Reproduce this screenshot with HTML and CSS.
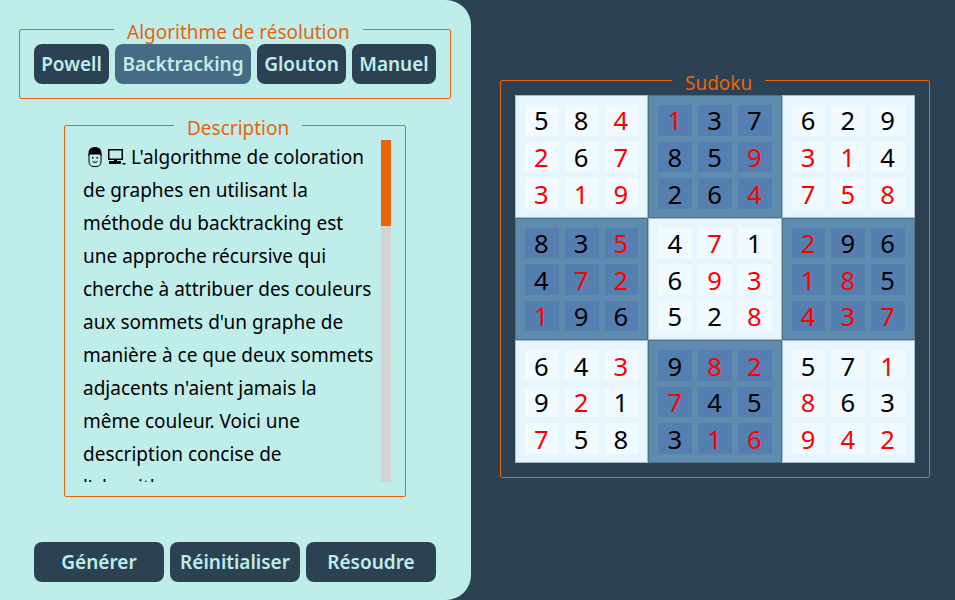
FILE: index.html
```html
<!DOCTYPE html>
<html lang="fr">
<head>
    <meta charset="UTF-8">
    <meta name="viewport" content="width=device-width, initial-scale=1.0">
    <title>Sudoku</title>
    <link rel="stylesheet" href="styles.css">
</head>
<body>
    <aside class="sidebar">
        <fieldset class="algo-box">
            <legend>Algorithme de résolution</legend>
            <div class="algo-buttons">
                <button class="btn">Powell</button>
                <button class="btn active">Backtracking</button>
                <button class="btn">Glouton</button>
                <button class="btn">Manuel</button>
            </div>
        </fieldset>

        <fieldset class="desc-box">
            <legend>Description</legend>
            <div class="desc-body">
                <div class="desc-text">
                    <svg class="icon-man" viewBox="0 0 14 21" width="14" height="21" aria-hidden="true">
                        <path d="M1 8v8c0 2.500 2 4.500 4 4.500h4c2 0 4-2 4-4.500V8" fill="none" stroke="#000" stroke-width="1"/>
                        <path d="M0.500 10V7C0.500 3 3.500 1 7 1s6.500 2 6.500 6v3L12 8.500H2z" fill="#000"/>
                        <rect x="4" y="11" width="1.500" height="1.500"/>
                        <rect x="8.500" y="11" width="1.500" height="1.500"/>
                        <path d="M4.500 15.500c1.500 1 3.500 1 5 0" fill="none" stroke="#000" stroke-width="1"/>
                    </svg><svg class="icon-pc" viewBox="0 0 18 16" width="18" height="16" aria-hidden="true">
                        <rect x="0.750" y="0.750" width="13.500" height="9.500" fill="none" stroke="#000" stroke-width="1.500"/>
                        <rect x="6" y="10.500" width="3" height="1.500"/>
                        <rect x="1" y="12" width="12" height="3"/>
                        <rect x="14.500" y="14" width="3" height="1.500"/>
                    </svg>L'algorithme de coloration de graphes en utilisant la méthode du backtracking est une approche récursive qui cherche à attribuer des couleurs aux sommets d'un graphe de manière à ce que deux sommets adjacents n'aient jamais la même couleur. Voici une description concise de l'algorithme :
                </div>
                <div class="scroll-track"><div class="scroll-thumb"></div></div>
            </div>
        </fieldset>

        <div class="actions">
            <button class="btn">Générer</button>
            <button class="btn">Réinitialiser</button>
            <button class="btn">Résoudre</button>
        </div>
    </aside>

    <main class="board">
        <fieldset class="sudoku-box">
            <legend>Sudoku</legend>
            <div class="grid" id="grid"></div>
        </fieldset>
    </main>

    <script>
        // value, r = red digit (solved by the algorithm)
        const blocks = [
            "5 8 4r 2r 6 7r 3r 1r 9r",
            "1r 3 7 8 5 9r 2 6 4r",
            "6 2 9 3r 1r 4 7r 5r 8r",
            "8 3 5r 4 7r 2r 1r 9 6",
            "4 7r 1 6 9r 3r 5 2 8r",
            "2r 9 6 1r 8r 5 4r 3r 7r",
            "6 4 3r 9 2r 1 7r 5 8",
            "9 8r 2r 7r 4 5 3 1r 6r",
            "5 7 1r 8r 6 3 9r 4r 2r"
        ];
        const grid = document.getElementById("grid");
        blocks.forEach((block, i) => {
            const div = document.createElement("div");
            div.className = i % 2 ? "block dark" : "block";
            block.split(" ").forEach(v => {
                const cell = document.createElement("div");
                cell.className = v.endsWith("r") ? "cell red" : "cell";
                cell.textContent = v[0];
                div.appendChild(cell);
            });
            grid.appendChild(div);
        });
    </script>
</body>
</html>
```

FILE: styles.css
```css
* {
    box-sizing: border-box;
}

body {
    font-family: "Noto Sans", sans-serif;
    background-color: #2c4152;
    display: flex;
    height: 100vh;
    margin: 0;
    overflow: hidden;
}

fieldset {
    margin: 0;
    padding-top: 0;
    border: 1px solid #e8640a;
    border-radius: 2px;
    min-width: 0;
}

legend {
    color: #e8640a;
    font-size: 19px;
    line-height: 24px;
    padding: 6px 13px 0;
    margin: 0 auto;
}

.sidebar {
    width: 471px;
    height: 600px;
    padding-right: 1px;
    background-color: #bfeeea;
    border-radius: 0 25px 25px 0;
    flex: none;
    display: flex;
    flex-direction: column;
    align-items: center;
}

.btn {
    height: 40px;
    padding: 0;
    border: none;
    border-radius: 8px;
    background-color: #2c4152;
    color: #bfeeea;
    font-family: inherit;
    font-size: 19px;
    font-weight: 600;
    white-space: nowrap;
    cursor: pointer;
}

.btn.active {
    background-color: #466b85;
}

.algo-box {
    width: 432px;
    height: 85px;
    margin-top: 14px;
    padding: 0 14px;
}

.algo-box legend {
    margin-left: 80px;
}

.algo-buttons {
    display: grid;
    grid-template-columns: 75px 136px 89px 84px;
    gap: 6px;
}

.desc-box {
    width: 342px;
    height: 387px;
    margin-top: 11px;
    padding: 0 14px 14px 18px;
}

.desc-box legend {
    margin-left: 91px;
}

.desc-body {
    display: flex;
    gap: 5px;
    height: 342px;
}

.desc-text {
    flex: 1;
    overflow: hidden;
    padding-top: 1px;
    font-size: 19px;
    line-height: 33px;
    color: #000;
}

.scroll-track {
    width: 10px;
    flex: none;
    background-color: #d3d3d3;
}

.scroll-thumb {
    height: 86px;
    background-color: #e8640a;
}

.icon-man {
    margin: 0 6px 0 5px;
    vertical-align: -3px;
}

.icon-pc {
    margin-right: 5px;
    vertical-align: -1px;
}

.actions {
    display: flex;
    gap: 6px;
    margin-top: 45px;
}

.actions .btn {
    width: 130px;
}

.board {
    flex: 1;
    padding-top: 65px;
    padding-left: 29px;
}

.sudoku-box {
    width: 430px;
    height: 413px;
    padding: 0 14px 14px;
}

.sudoku-box legend {
    margin-left: 157px;
}

.grid {
    width: 400px;
    height: 368px;
    display: grid;
    grid-template-columns: repeat(3, minmax(0, 1fr));
    grid-template-rows: repeat(3, minmax(0, 1fr));
}

.block {
    display: grid;
    grid-template-columns: repeat(3, minmax(0, 1fr));
    grid-template-rows: repeat(3, minmax(0, 1fr));
    gap: 6px;
    padding: 9px 9px 8px;
    background-color: #e6f5fe;
    border: 1px solid #a8bccb;
}

.block.dark {
    background-color: #5f8bae;
    border-color: #4d7189;
}

.cell {
    display: flex;
    align-items: center;
    justify-content: center;
    padding: 2px 1px 0 0;
    background-color: #f0faff;
    color: #000;
    font-size: 25.6px;
    line-height: 1;
}

.dark .cell {
    background-color: #557fb0;
}

.cell.red {
    color: #ff0000;
}
```
